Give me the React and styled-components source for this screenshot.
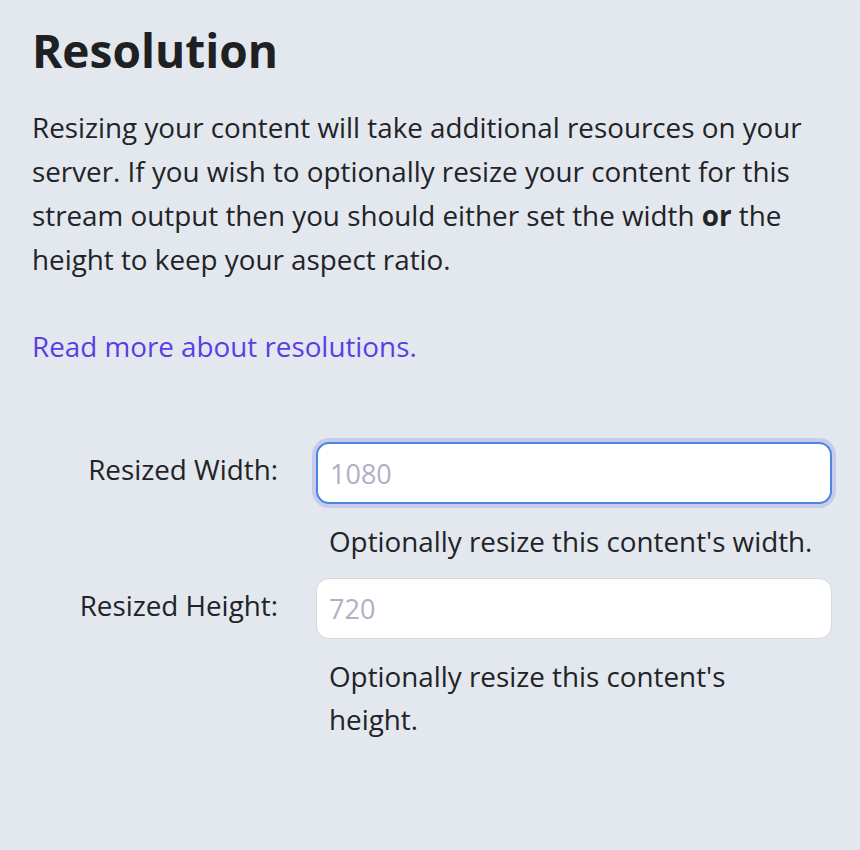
import React from 'react'
import styled, { createGlobalStyle } from 'styled-components'

const GlobalStyle = createGlobalStyle`
  html, body {
    margin: 0;
    padding: 0;
    background: #e3e7ee;
  }
  body {
    font-family: "Open Sans", "Noto Sans", sans-serif;
    color: #222326;
  }
`

function App() {
  return (
    <Page>
      <GlobalStyle />
      <Title>Resolution</Title>
      <Intro>
        Resizing your content will take additional resources on your server. If you wish to
        optionally resize your content for this stream output then you should either set the
        width <b>or</b> the height to keep your aspect ratio.
      </Intro>
      <MoreLink href="#">Read more about resolutions.</MoreLink>

      <Form>
        <Field>
          <Label htmlFor="width">Resized Width:</Label>
          <Control>
            <Input id="width" placeholder="1080" focused />
            <Help>Optionally resize this content's width.</Help>
          </Control>
        </Field>
        <Field>
          <Label htmlFor="height">Resized Height:</Label>
          <Control>
            <Input id="height" placeholder="720" />
            <Help>Optionally resize this content's height.</Help>
          </Control>
        </Field>
      </Form>
    </Page>
  )
}

export default App

const Page = styled.div`
  padding: 20px 28px 40px 32px;
  min-height: 100vh;
  box-sizing: border-box;
`

const Title = styled.h1`
  margin: 0;
  font-size: 46px;
  font-weight: 700;
  line-height: 60px;
  color: #1f2023;
`

const Intro = styled.p`
  margin: 25px 0 0;
  font-size: 27.8px;
  line-height: 44px;
  max-width: 790px;

  b {
    font-weight: 700;
  }
`

const MoreLink = styled.a`
  display: block;
  margin-top: 43px;
  font-size: 27.8px;
  line-height: 44px;
  color: #5b3de6;
  text-decoration: none;
`

const Form = styled.div`
  margin-top: 74px;
  display: flex;
  flex-direction: column;
  gap: 15px;
`

const Field = styled.div`
  display: grid;
  grid-template-columns: 246px 1fr;
  column-gap: 38px;
`

const Label = styled.label`
  text-align: right;
  font-size: 27.8px;
  line-height: 54px;
  color: #222326;
`

const Control = styled.div`
  display: flex;
  flex-direction: column;
`

const Input = styled.input.withConfig({ shouldForwardProp: p => p !== 'focused' })`
  box-sizing: border-box;
  height: ${p => (p.focused ? '62px' : '61px')};
  width: 100%;
  padding: 0 12px;
  font-family: "Open Sans", "Noto Sans", sans-serif;
  font-size: 27px;
  color: #222326;
  background: #fff;
  border-radius: 13px;
  outline: none;
  border: ${p => (p.focused ? '2px solid #4a86e0' : '1.5px solid #d6d8dc')};
  box-shadow: ${p => (p.focused ? '0 0 0 4px #c9cbec' : 'none')};

  &::placeholder {
    color: #b3aec4;
  }
`

const Help = styled.div`
  padding: 0 13px;
  margin-top: 16px;
  font-size: 27.8px;
  line-height: 43px;
  color: #222326;
`
